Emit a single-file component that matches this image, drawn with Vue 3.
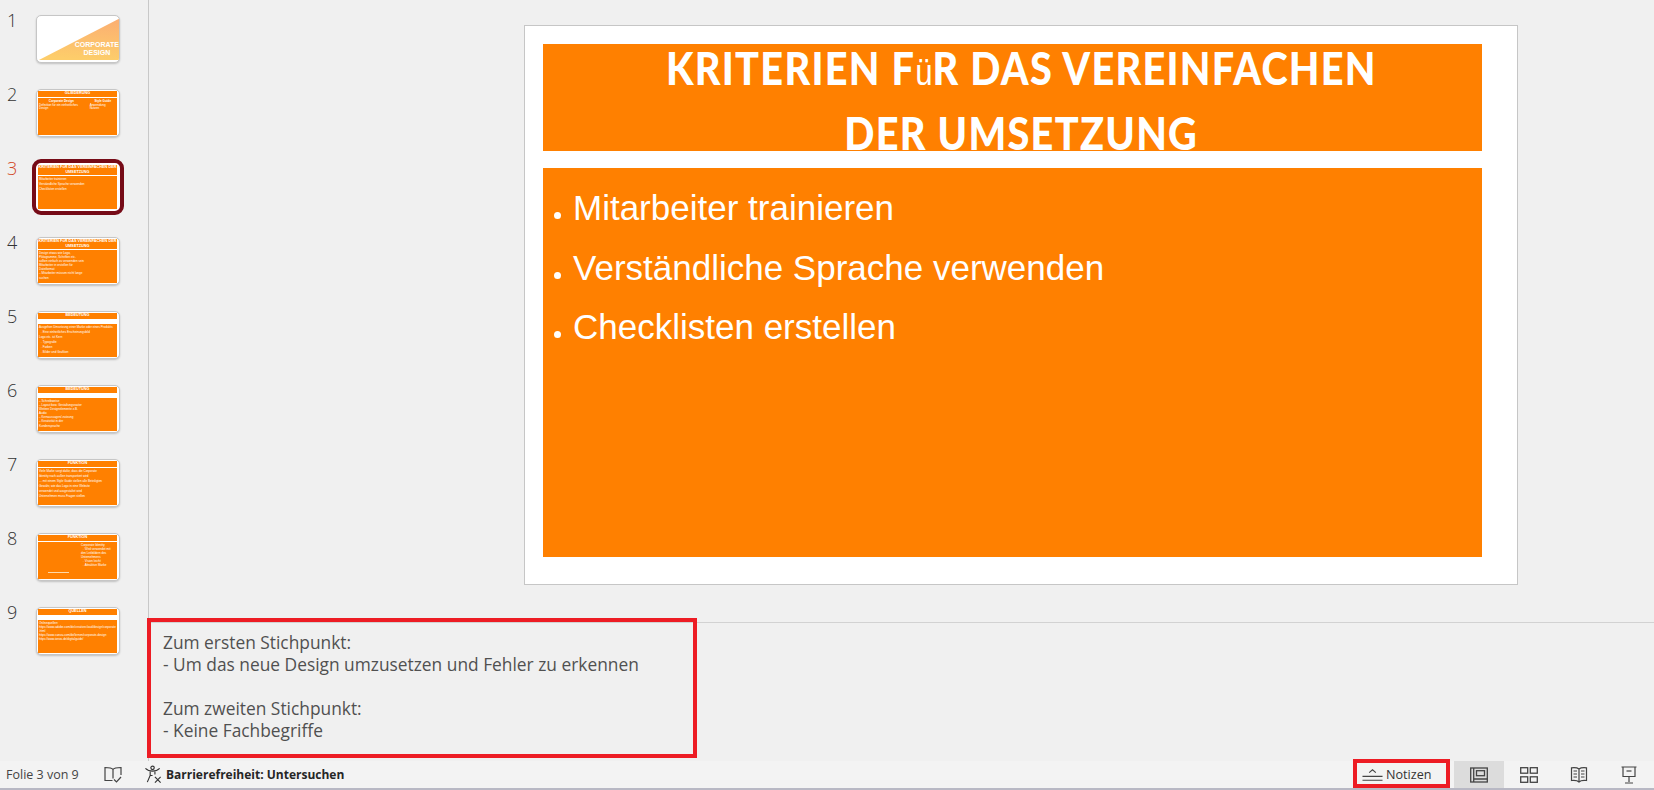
<script setup>
const slides = [
  { n: 1, cover: true },
  { n: 2, title: 'GLIEDERUNG', two: true, titleH: 6 },
  { n: 3, selected: true, title: 'KRITERIEN FüR DAS VEREINFACHEN DER UMSETZUNG', titleH: 10, lines: ['Mitarbeiter trainieren', 'Verständliche Sprache verwenden', 'Checklisten erstellen'], roomy: true },
  { n: 4, title: 'KRITERIEN FüR DAS VEREINFACHEN DER UMSETZUNG', titleH: 10, lines: ['Design etwas wie Logo,', 'Piktogramme, Schriften etc.', 'sollten einfach zu verwenden sein', 'Mitarbeiter in erstellen für', 'Dateiformat', '– Mitarbeiter müssen nicht lange', 'suchen'] },
  { n: 5, title: 'BEDEUTUNG', titleH: 6, gap: 4, lines: ['Ausgehen Umsetzung einer Marke oder eines Produkts', '→ Eine einheitliches Erscheinungsbild', 'Logo etc. ist Kern', '→ Typografie', '→ Farben', '→ Bilder und Grafiken'], loose: true },
  { n: 6, title: 'BEDEUTUNG', titleH: 6, gap: 4, lines: ['– Schreibweise', '– Layout bzw. Gestaltungsraster', 'Weitere Designelemente z.B.', 'Audio', '– Kernaussagen/-nutzung', '– Kreativität in der', 'Kundensprache'] },
  { n: 7, title: 'FUNKTION', titleH: 6, lines: ['Viele Marke sorgt dafür, dass die Corporate', 'Identity nach außen transportiert wird', '… mit einem Style Guide stellen alle Beteiligten', 'Gewähr, wie das Logo in eine Website', 'verwendet und ausgestaltet wird', 'Unternehmen muss Fragen stellen'], loose: true },
  { n: 8, title: 'FUNKTION', titleH: 6, side: true, lines: ['Corporate Identity', '→ Wird verwendet mit', 'den Leitbildern des', 'Unternehmens', '→ Vision leicht', '→ Attraktive Marke'] },
  { n: 9, title: 'QUELLEN', titleH: 6, gap: 2, lines: ['Onlinequellen:', 'https://www.adobe.com/de/creativecloud/design/corporate.html', 'https://www.canva.com/de/lernen/corporate-design', 'https://www.ionos.de/digitalguide/'] }
]
const notes = [
  'Zum ersten Stichpunkt:',
  '- Um das neue Design umzusetzen und Fehler zu erkennen',
  '',
  'Zum zweiten Stichpunkt:',
  '- Keine Fachbegriffe'
]
const bullets = ['Mitarbeiter trainieren', 'Verständliche Sprache verwenden', 'Checklisten erstellen']
</script>

<template>
  <div class="app">
    <div class="workspace">
      <aside class="sidebar">
        <div v-for="s in slides" :key="s.n" class="row" :class="{ active: s.selected }">
          <span class="num">{{ s.n }}</span>
          <div class="thumb">
            <template v-if="s.cover">
              <div class="cover">
                <svg class="cover-art" viewBox="0 0 84 48" preserveAspectRatio="none">
                  <defs>
                    <linearGradient id="cg" x1="0.9" y1="0" x2="0.8" y2="1">
                      <stop offset="0" stop-color="#fbae72" />
                      <stop offset="1" stop-color="#fdcd6a" />
                    </linearGradient>
                  </defs>
                  <polygon points="84,3 84,48 2,48" fill="url(#cg)" />
                </svg>
                <div class="cover-text">CORPORATE<br />DESIGN</div>
              </div>
            </template>
            <template v-else>
              <div class="t-title" :style="{ height: s.titleH + 'px' }">{{ s.title }}</div>
              <div class="t-body" :class="{ gap: s.gap, loose: s.loose, side: s.side, roomy: s.roomy }">
                <template v-if="s.two">
                  <div class="t-col wide"><b>Corporate Design</b><p>Definition für ein einheitliches Design</p></div>
                  <div class="t-col"><b>Style Guide</b><p>Anwendung</p><p>Nutzen</p></div>
                </template>
                <template v-else>
                  <p v-for="l in s.lines" :key="l">{{ l }}</p>
                </template>
              </div>
            </template>
          </div>
        </div>
      </aside>

      <main class="editor">
        <div class="stage">
          <section class="slide">
            <h1 class="heading">
              <span>KRITERIEN F<i>ü</i>R DAS VEREINFACHEN</span>
              <span>DER UMSETZUNG</span>
            </h1>
            <ul class="content">
              <li v-for="b in bullets" :key="b">{{ b }}</li>
            </ul>
          </section>
        </div>
        <div class="notes">
          <p v-for="(n, i) in notes" :key="i">{{ n || '\u00a0' }}</p>
        </div>
        <div class="mark notes-mark"></div>
      </main>
    </div>

    <footer class="status">
      <span class="count">Folie 3 von 9</span>
      <svg class="ic book" viewBox="0 0 18 18" fill="none" stroke="#444" stroke-width="1.200">
        <path d="M9 3.500C8 2 5 1.500 1 1.500V14.500H8.500M9 3.500C10 2 13 1.500 17 1.500V9M9 3.500V12.500" />
        <path d="M10 13.500l2.500 2.500 4.500-5" />
      </svg>
      <svg class="ic access" viewBox="0 0 20 20" fill="none" stroke="#333" stroke-width="1.200">
        <circle cx="9" cy="3" r="1.800" />
        <path d="M1.500 3.500C4 6 6 6.500 9 6.500S14 6 16.500 3.500M6.500 7v4L3.500 18M11.500 7v3M6.500 11h2.500" />
        <path d="M11.500 12.500l6 6M17.500 12.500l-6 6" />
      </svg>
      <span class="a11y">Barrierefreiheit: Untersuchen</span>
      <span class="spring"></span>
      <div class="notes-btn">
        <svg class="ic notes-ic" viewBox="0 0 22 14" fill="none" stroke="#444" stroke-width="1.200">
          <path d="M7.500 4.500L11 1.500l3.500 3" />
          <path d="M0.500 8.500h21M0.500 12.500h21" />
        </svg>
        <span>Notizen</span>
      </div>
      <div class="view current">
        <svg class="ic" viewBox="0 0 18 16" fill="none" stroke="#444" stroke-width="1.300">
          <rect x="0.700" y="1" width="16.600" height="14" />
          <path d="M3.700 1v14M3.700 12h13.600" />
          <rect x="6.500" y="3.700" width="8" height="5" />
        </svg>
      </div>
      <div class="view">
        <svg class="ic" viewBox="0 0 18 16" fill="none" stroke="#444" stroke-width="1.300">
          <rect x="0.700" y="0.700" width="7" height="5.500" />
          <rect x="10.300" y="0.700" width="7" height="5.500" />
          <rect x="0.700" y="9.800" width="7" height="5.500" />
          <rect x="10.300" y="9.800" width="7" height="5.500" />
        </svg>
      </div>
      <div class="view">
        <svg class="ic" viewBox="0 0 18 16" fill="none" stroke="#444" stroke-width="1.200">
          <path d="M9 2C7.500 0.800 4 0.500 1.500 0.800V13.500C4 13.200 7.500 13.500 9 15C10.500 13.500 14 13.200 16.500 13.500V0.800C14 0.500 10.500 0.800 9 2ZM9 2V15" />
          <path d="M3.500 4h3.500M3.500 7h3.500M3.500 10h3.500M11 4h3.500M11 7h3.500M11 10h3.500" />
        </svg>
      </div>
      <div class="view">
        <svg class="ic present" viewBox="0 0 16 18" fill="none" stroke="#444" stroke-width="1.200">
          <path d="M0.500 1h15M2 1v9.500h12V1M8 10.500v5.500M4 17h8" />
          <path d="M5.500 5h5" />
        </svg>
      </div>
      <div class="mark notes-btn-mark"></div>
    </footer>
  </div>
</template>

<style>
html, body { margin: 0; background: #f0f0f0; }
</style>

<style scoped>
.app {
  width: 1654px;
  height: 790px;
  display: flex;
  flex-direction: column;
  overflow: hidden;
  background: #f0f0f0;
  font-family: "Open Sans", "Noto Sans", sans-serif;
  color: #444;
}
.workspace { flex: 1; display: flex; min-height: 0; position: relative; }
.sidebar {
  width: 148px;
  border-right: 1px solid #c8c8c8;
  padding-top: 15px;
  box-sizing: content-box;
  display: flex;
  flex-direction: column;
  gap: 26px;
}
.row { position: relative; height: 48px; padding-left: 36px; }
.num {
  position: absolute;
  left: 7px;
  top: -8px;
  font-size: 18px;
  font-weight: 300;
  line-height: 26px;
  color: #333;
}
.active .num { color: #d24726; }
.thumb {
  width: 84px;
  height: 48px;
  box-sizing: border-box;
  background: #fff;
  border: 1px solid #c6c6c6;
  border-radius: 5px;
  box-shadow: 0 1px 2px rgba(0, 0, 0, .2);
  padding: 1px 2px 1px 1px;
  overflow: hidden;
  display: flex;
  flex-direction: column;
  gap: 1px;
}
.active .thumb {
  outline: 4px solid #760b17;
  outline-offset: 0;
  border-color: #fff;
  box-shadow: none;
  position: relative;
}
.cover { position: relative; height: 100%; margin: -1px -2px -1px -1px; }
.cover-art { position: absolute; inset: 0; width: 100%; height: 100%; }
.cover-text {
  position: absolute;
  right: 0;
  top: 25px;
  font-family: "Liberation Sans", sans-serif;
  font-weight: 700;
  font-size: 7px;
  line-height: 8px;
  text-align: center;
  color: #fff;
}
.t-title {
  background: #ff8000;
  color: #fff;
  font-family: "Liberation Sans", sans-serif;
  font-weight: 700;
  font-size: 3.800px;
  line-height: 5px;
  text-align: center;
  overflow: hidden;
  flex: none;
}
.t-body {
  flex: 1;
  min-height: 0;
  background: #ff8000;
  color: #fff;
  font-family: "Liberation Sans", sans-serif;
  font-size: 3px;
  line-height: 3.600px;
  padding: 2px 1px;
  overflow: hidden;
  overflow-wrap: anywhere;
  position: relative;
}
.t-body p { margin: 0 0 .5px; }
.t-body.gap { margin-top: 4px; }
.t-body.loose p { margin-bottom: 1.500px; }
.t-body.roomy p { margin-bottom: 1.500px; }
.t-body.side { padding-left: 43px; }
.t-body.side::before {
  content: "";
  position: absolute;
  left: 10px;
  bottom: 6px;
  width: 21px;
  height: 1px;
  background: #ffd9a8;
}
.t-body:has(.t-col) { display: flex; gap: 6px; }
.t-col { flex: 1; }
.t-col.wide { flex: 1.700; }
.t-col b { display: block; text-align: center; }
.t-col p { margin: 0; }

.editor { flex: 1; display: flex; flex-direction: column; position: relative; min-width: 0; }
.stage { height: 623px; border-bottom: 1px solid #d2d2d2; box-sizing: border-box; position: relative; flex: none; padding: 25px 0 0 375px; }
.slide {
  width: 994px;
  height: 560px;
  box-sizing: border-box;
  background: #fff;
  border: 1px solid #c6c6c6;
  padding: 18px 35px 27px 18px;
  display: flex;
  flex-direction: column;
  gap: 17px;
}
.heading {
  margin: 0;
  height: 107px;
  flex: none;
  background: #ff8000;
  color: #fff;
  font-family: "Lato", sans-serif;
  font-weight: 900;
  font-size: 46px;
  line-height: 46px;
  letter-spacing: 1.500px;
  text-align: center;
  display: flex;
  flex-direction: column;
  align-items: center;
  gap: 14px;
  padding: 1px 0 0 18px;
  box-sizing: border-box;
  white-space: nowrap;
}
.heading span { display: block; transform: scaleX(.862); }
.heading i { font-style: normal; font-weight: 400; font-family: "Liberation Sans", sans-serif; font-size: 36px; letter-spacing: 0; }
.content {
  flex: 1;
  margin: 0;
  padding: 10px 0 0 30px;
  background: #ff8000;
  color: #fff;
  font-family: "Liberation Sans", sans-serif;
  font-size: 35px;
  line-height: 59.500px;
  list-style: none;
}
.content li { position: relative; }
.content li::before {
  content: "";
  position: absolute;
  left: -19px;
  top: 34px;
  width: 7px;
  height: 7px;
  border-radius: 50%;
  background: #fff;
}
.notes {
  flex: 1;
  padding: 8px 0 0 14px;
  font-size: 17.350px;
  line-height: 22px;
  color: #505050;
}
.notes p { margin: 0; }
.mark { position: absolute; border: 4px solid #ed1c24; box-sizing: border-box; pointer-events: none; }
.notes-mark { left: -2px; top: 618px; width: 550px; height: 140px; }

.status {
  height: 27px;
  flex: none;
  display: flex;
  align-items: center;
  background: #f3f3f3;
  border-bottom: 2px solid #b8b8c4;
  font-size: 12.500px;
  position: relative;
  color: #333;
}
.count { margin-left: 6px; width: 98px; color: #444; }
.ic { display: block; }
.book { width: 18px; height: 18px; margin-right: 22px; }
.access { width: 19px; height: 19px; margin-right: 3px; }
.a11y { font-weight: 700; font-size: 12px; color: #262626; }
.spring { flex: 1; }
.notes-btn { display: flex; align-items: center; gap: 3px; width: 97px; padding-left: 10px; box-sizing: border-box; font-size: 12.600px; margin-right: 5px; }
.notes-ic { width: 21px; height: 14px; }
.view { width: 50px; height: 100%; display: flex; align-items: center; justify-content: center; }
.view .ic { width: 18px; height: 16px; }
.view .ic.present { width: 16px; height: 18px; }
.view.current { background: #dcdcdc; }
.notes-btn-mark { left: 1353px; top: -2px; width: 97px; height: 29px; }
</style>
